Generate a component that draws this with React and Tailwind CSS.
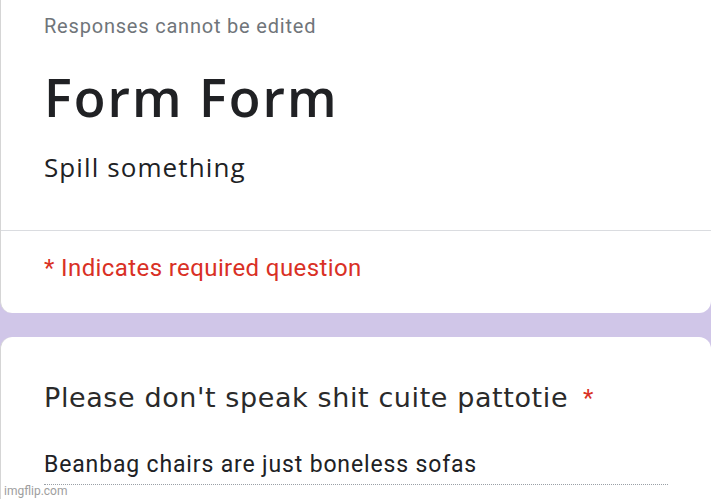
export default function App() {
  return (
    <div className="relative w-[711px] h-[499px] overflow-hidden bg-[#d0c6e8]">
      <div className="h-[313px] flex flex-col bg-white rounded-b-[12px] border-l border-[#d5d5d5]">
        <div className="h-[230px] pl-[43px] pt-[14px] flex flex-col">
          <div className="font-['Roboto'] text-[20px] leading-[24px] tracking-[0.8px] text-[#70757a]">
            Responses cannot be edited
          </div>
          <div className="mt-[31px] font-['Open_Sans'] font-semibold text-[52px] leading-[56px] tracking-[2px] text-[#202124]">
            Form Form
          </div>
          <div className="mt-[26px] font-['Open_Sans'] text-[26px] leading-[32px] tracking-[1.1px] text-[#202124]">
            Spill something
          </div>
        </div>
        <div className="h-px bg-[#dadce0]" />
        <div className="pl-[43px] pt-[23px] font-['Roboto'] text-[24px] leading-[28px] tracking-[0.4px] text-[#d93025]">
          * Indicates required question
        </div>
      </div>
      <div className="mt-[24px] h-[200px] bg-white rounded-t-[12px] border-l border-[#d5d5d5] pl-[43px] pt-[45px] flex flex-col">
        <div className="flex items-start gap-[15px]">
          <span className="font-['DejaVu_Sans'] text-[27px] leading-[32px] tracking-[0.6px] text-[#2a2a2a]">
            Please don't speak shit cuite pattotie
          </span>
          <span className="font-['Roboto'] text-[24px] leading-[32px] text-[#d93025]">*</span>
        </div>
        <div className="mt-[37px] w-[624px] pb-[5px] border-b border-dotted border-[#9aa0a6]">
          <div className="font-['Roboto'] text-[23px] leading-[28px] tracking-[0.85px] text-[#202124]">
            Beanbag chairs are just boneless sofas
          </div>
        </div>
      </div>
      <div className="absolute left-[4px] bottom-[1px] font-['Roboto'] text-[12px] leading-[14px] text-[#9e9e9e]">
        imgflip.com
      </div>
    </div>
  );
}
